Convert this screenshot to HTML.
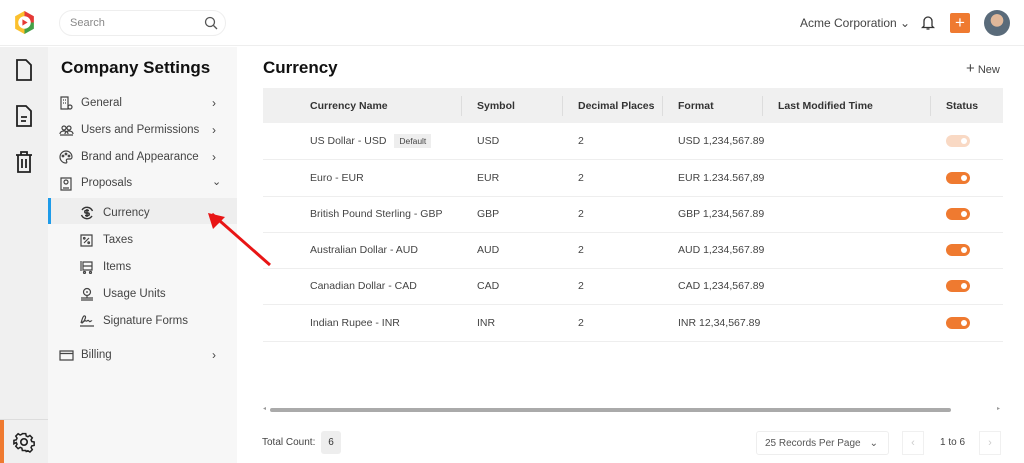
<!DOCTYPE html>
<html><head><style>
*{box-sizing:border-box;margin:0;padding:0}
body{width:1024px;height:463px;overflow:hidden;font-family:"Liberation Sans",sans-serif;background:#fff;color:#333;position:relative;font-size:11px}
.abs{position:absolute}
.top{left:0;top:0;width:1024px;height:46px;border-bottom:1px solid #eee}
.rail{left:0;top:47px;width:48px;height:416px;background:#f0f0f0}
.side{left:48px;top:47px;width:189px;height:416px;background:#f7f7f7}
.t{position:absolute;font-size:11.5px;color:#444;margin-top:2px}
.ic{position:absolute;margin-top:2px}
.chev{position:absolute;left:164px;font-size:12px;color:#444;margin-top:2px}
.th{position:absolute;top:100px;font-weight:bold;font-size:10.5px;color:#333}
.div{position:absolute;top:96px;width:1px;height:20px;background:#ddd}
.row{position:absolute;left:263px;width:740px;height:37px;border-bottom:1px solid #eee;font-size:10.5px;color:#444}
.row span{position:absolute;top:12px}
.tg{position:absolute;left:683px;top:12px;width:24px;height:12px;border-radius:6px;background:#ef7a30}
.tg:after{content:"";position:absolute;right:3px;top:3px;width:6px;height:6px;border-radius:3px;background:#fff}
</style></head><body>
<div class="abs top">
 <svg class="abs" style="left:12px;top:10px" width="25" height="25" viewBox="0 0 24 24"><path d="M12 1 L21 6 L21 12 L12 12Z" fill="#e53935"/><path d="M21 12 L21 18 L12 23 L12 12Z" fill="#43a047"/><path d="M12 23 L3 18 L3 6 L12 1 L12 12Z" fill="#fbc02d"/><circle cx="12" cy="12" r="6" fill="#fff"/><path d="M10 9 L15 12 L10 15Z" fill="#e53935"/></svg>
 <div class="abs" style="left:59px;top:10px;width:167px;height:26px;border:1px solid #eee;border-radius:13px"><span class="abs" style="left:10px;top:6px;color:#888;font-size:11px">Search</span><svg class="abs" style="left:144px;top:5px" width="14" height="14" viewBox="0 0 14 14"><circle cx="6" cy="6" r="4.5" fill="none" stroke="#555" stroke-width="1.3"/><path d="M9.5 9.5 L13 13" stroke="#555" stroke-width="1.3"/></svg></div>
 <span class="abs" style="left:800px;top:16px;font-size:12px;color:#444">Acme Corporation ⌄</span>
 <svg class="abs" style="left:921px;top:14px" width="14" height="17" viewBox="0 0 14 17"><path d="M3 12 V7 a4 4 0 0 1 8 0 V12 L12.5 13.5 H1.5Z M5.5 15 h3" fill="none" stroke="#333" stroke-width="1.3"/></svg>
 <div class="abs" style="left:950px;top:13px;width:20px;height:20px;background:#ef7a30;border-radius:2px;color:#fff;font-size:17px;text-align:center;line-height:19px">+</div>
 <div class="abs" style="left:984px;top:10px;width:26px;height:26px;border-radius:13px;background:radial-gradient(circle at 50% 40%,#e0b89a 0 30%,#5a6b7a 32%);"></div>
</div>
<div class="abs rail">
 <svg class="abs" style="left:15px;top:12px" width="18" height="22" viewBox="0 0 18 22"><path d="M2 1 H11 L16 6 V21 H2Z" fill="none" stroke="#222" stroke-width="1.8"/></svg>
 <svg class="abs" style="left:15px;top:58px" width="18" height="22" viewBox="0 0 18 22"><path d="M2 1 H11 L16 6 V21 H2Z M6 12 H12 M6 16 H11" fill="none" stroke="#222" stroke-width="1.8"/></svg>
 <svg class="abs" style="left:15px;top:104px" width="18" height="22" viewBox="0 0 18 22"><path d="M1 4 H17 M6 4 V1 H12 V4 M3 4 V21 H15 V4 M7 8 V17 M11 8 V17" fill="none" stroke="#222" stroke-width="1.8"/></svg>
 <div class="abs" style="left:0;top:372px;width:48px;height:1px;background:#ddd"></div>
 <div class="abs" style="left:0;top:373px;width:4px;height:43px;background:#ef7a30"></div>
 <svg class="abs" style="left:13px;top:384px" width="22" height="22" viewBox="0 0 24 24"><path d="M10 2h4l.6 2.8 2 .9 2.4-1.5 2.8 2.8-1.5 2.4.9 2 2.8.6v4l-2.8.6-.9 2 1.5 2.4-2.8 2.8-2.4-1.5-2 .9L14 22h-4l-.6-2.8-2-.9-2.4 1.5-2.8-2.8 1.5-2.4-.9-2L0 14v-4l2.8-.6.9-2L2.2 5 5 2.2l2.4 1.5 2-.9Z" fill="none" stroke="#222" stroke-width="1.8" transform="translate(1 1) scale(.92)"/><circle cx="12" cy="12" r="3.5" fill="none" stroke="#222" stroke-width="1.8"/></svg>
</div>
<div class="abs side">
 <div class="abs" style="left:13px;top:11px;font-size:17px;font-weight:bold;color:#111">Company Settings</div>
 <svg class="ic" style="left:12px;top:47px" width="13" height="14" viewBox="0 0 13 14" fill="none" stroke="#444" stroke-width="1.2"><path d="M1 1h7v12H1Z M3 4h1M5 4h1M3 7h1M5 7h1"/><circle cx="10" cy="11" r="2"/></svg>
 <span class="t" style="left:33px;top:48px">General</span><span class="chev" style="top:47px">›</span>
 <svg class="ic" style="left:11px;top:76px" width="15" height="11" viewBox="0 0 15 11" fill="none" stroke="#444" stroke-width="1.2"><circle cx="5" cy="3" r="2"/><circle cx="10" cy="3" r="2"/><path d="M1 9c0-2 2-3 4-3s4 1 4 3M6 9c0-2 2-3 4-3s4 1 4 3M1 10h13"/></svg>
 <span class="t" style="left:33px;top:75px">Users and Permissions</span><span class="chev" style="top:74px">›</span>
 <svg class="ic" style="left:11px;top:101px" width="14" height="14" viewBox="0 0 14 14" fill="none" stroke="#444" stroke-width="1.2"><path d="M7 1a6 6 0 1 0 0 12c1 0 1-1 .5-2s0-2 1.5-2h2A2 2 0 0 0 13 7a6 6 0 0 0-6-6Z"/><circle cx="4" cy="6" r=".8"/><circle cx="7" cy="4" r=".8"/><circle cx="10" cy="6" r=".8"/></svg>
 <span class="t" style="left:33px;top:102px">Brand and Appearance</span><span class="chev" style="top:101px">›</span>
 <svg class="ic" style="left:12px;top:128px" width="12" height="14" viewBox="0 0 12 14" fill="none" stroke="#444" stroke-width="1.2"><path d="M1 1h10v12H1Z M3 11h6"/><circle cx="6" cy="5" r="2"/></svg>
 <span class="t" style="left:33px;top:128px">Proposals</span><span class="chev" style="top:126px;font-size:11px">⌄</span>
 <div class="abs" style="left:0;top:151px;width:189px;height:26px;background:#eee"></div>
 <div class="abs" style="left:0;top:151px;width:3px;height:26px;background:#1e9be9"></div>
 <svg class="ic" style="left:32px;top:157px" width="14" height="14" viewBox="0 0 14 14" fill="none" stroke="#333" stroke-width="1.4"><path d="M2 4a6 6 0 0 1 10.5 1M12 10a6 6 0 0 1-10.5-1"/><path d="M9 4.5H6a1.2 1.2 0 0 0 0 2.5h2a1.2 1.2 0 0 1 0 2.5H5M7 3v8"/></svg>
 <span class="t" style="left:55px;top:158px">Currency</span>
 <svg class="ic" style="left:32px;top:185px" width="13" height="13" viewBox="0 0 13 13" fill="none" stroke="#444" stroke-width="1.2"><path d="M1 1h11v11H1Z M4 9l5-5"/><circle cx="4.3" cy="4.3" r=".8"/><circle cx="8.7" cy="8.7" r=".8"/></svg>
 <span class="t" style="left:55px;top:185px">Taxes</span>
 <svg class="ic" style="left:32px;top:211px" width="14" height="14" viewBox="0 0 14 14" fill="none" stroke="#444" stroke-width="1.2"><path d="M1 1v10M3 2h9v8H3Z M3 6h9"/><circle cx="4.5" cy="12.5" r="1"/><circle cx="10.5" cy="12.5" r="1"/></svg>
 <span class="t" style="left:55px;top:212px">Items</span>
 <svg class="ic" style="left:32px;top:238px" width="14" height="14" viewBox="0 0 14 14" fill="none" stroke="#444" stroke-width="1.2"><circle cx="7" cy="5" r="3.5"/><path d="M7 4v2M7 8.5v2M1 11h12M1 13h12"/></svg>
 <span class="t" style="left:55px;top:239px">Usage Units</span>
 <svg class="ic" style="left:31px;top:265px" width="16" height="13" viewBox="0 0 16 13" fill="none" stroke="#444" stroke-width="1.2"><path d="M2 9c1-3 2-8 4-7s-2 7-3 7 3-3 4-2 2-2 3 0 2-1 3 0M1 12h14"/></svg>
 <span class="t" style="left:55px;top:266px">Signature Forms</span>
 <svg class="ic" style="left:11px;top:301px" width="15" height="11" viewBox="0 0 15 11" fill="none" stroke="#444" stroke-width="1.2"><path d="M1 1h13v9H1Z M1 3.5h13"/></svg>
 <span class="t" style="left:33px;top:300px">Billing</span><span class="chev" style="top:299px">›</span>
</div>
<div class="abs" style="left:263px;top:58px;font-size:17px;font-weight:bold;color:#111">Currency</div>
<span class="abs" style="left:966px;top:60px;font-size:11px;color:#444"><span style="font-size:15px">+</span> New</span>
<div class="abs" style="left:263px;top:88px;width:740px;height:35px;background:#f0f0f0"></div>
<span class="th" style="left:310px">Currency Name</span><span class="th" style="left:477px">Symbol</span><span class="th" style="left:578px">Decimal Places</span><span class="th" style="left:678px">Format</span><span class="th" style="left:778px">Last Modified Time</span><span class="th" style="left:946px">Status</span>
<div class="div" style="left:461px"></div><div class="div" style="left:562px"></div><div class="div" style="left:662px"></div><div class="div" style="left:762px"></div><div class="div" style="left:930px"></div>
<div class="row" style="top:123px"><span style="left:47px;top:12px">US Dollar - USD <b style="font-weight:normal;font-size:8.5px;background:#eee;padding:2px 5px;margin-left:5px">Default</b></span><span style="left:214px">USD</span><span style="left:315px">2</span><span style="left:415px">USD 1,234,567.89</span><div class="tg" style="background:#f9d9c4"></div></div>
<div class="row" style="top:160px"><span style="left:47px">Euro - EUR</span><span style="left:214px">EUR</span><span style="left:315px">2</span><span style="left:415px">EUR 1.234.567,89</span><div class="tg"></div></div>
<div class="row" style="top:196px"><span style="left:47px">British Pound Sterling - GBP</span><span style="left:214px">GBP</span><span style="left:315px">2</span><span style="left:415px">GBP 1,234,567.89</span><div class="tg"></div></div>
<div class="row" style="top:232px"><span style="left:47px">Australian Dollar - AUD</span><span style="left:214px">AUD</span><span style="left:315px">2</span><span style="left:415px">AUD 1,234,567.89</span><div class="tg"></div></div>
<div class="row" style="top:268px"><span style="left:47px">Canadian Dollar - CAD</span><span style="left:214px">CAD</span><span style="left:315px">2</span><span style="left:415px">CAD 1,234,567.89</span><div class="tg"></div></div>
<div class="row" style="top:305px"><span style="left:47px">Indian Rupee - INR</span><span style="left:214px">INR</span><span style="left:315px">2</span><span style="left:415px">INR 12,34,567.89</span><div class="tg"></div></div>
<div class="abs" style="left:270px;top:408px;width:681px;height:4px;border-radius:2px;background:#aaa"></div>
<span class="abs" style="left:263px;top:405px;font-size:6px;color:#999">◂</span><span class="abs" style="left:997px;top:405px;font-size:6px;color:#999">▸</span>
<span class="abs" style="left:262px;top:437px;font-size:10px;color:#444">Total Count:</span>
<div class="abs" style="left:321px;top:431px;width:20px;height:23px;background:#eee;border-radius:3px;text-align:center;line-height:23px;font-size:10px">6</div>
<div class="abs" style="left:756px;top:431px;width:133px;height:24px;border:1px solid #eee;border-radius:3px;font-size:10px;color:#555;padding:6px 8px">25 Records Per Page<span style="position:absolute;right:10px">⌄</span></div>
<div class="abs" style="left:902px;top:431px;width:22px;height:24px;border:1px solid #f0f0f0;color:#ccc;text-align:center;line-height:22px">‹</div>
<span class="abs" style="left:940px;top:437px;font-size:10px;color:#444">1 to 6</span>
<div class="abs" style="left:979px;top:431px;width:22px;height:24px;border:1px solid #f0f0f0;color:#ccc;text-align:center;line-height:22px">›</div>
<svg class="abs" style="left:200px;top:205px" width="75" height="65"><path d="M270 265 L212 214" transform="translate(-200,-205)" stroke="#e81515" stroke-width="3"/><path d="M8 8 L25 12 L13 24Z" fill="#e81515"/></svg>
</body></html>
